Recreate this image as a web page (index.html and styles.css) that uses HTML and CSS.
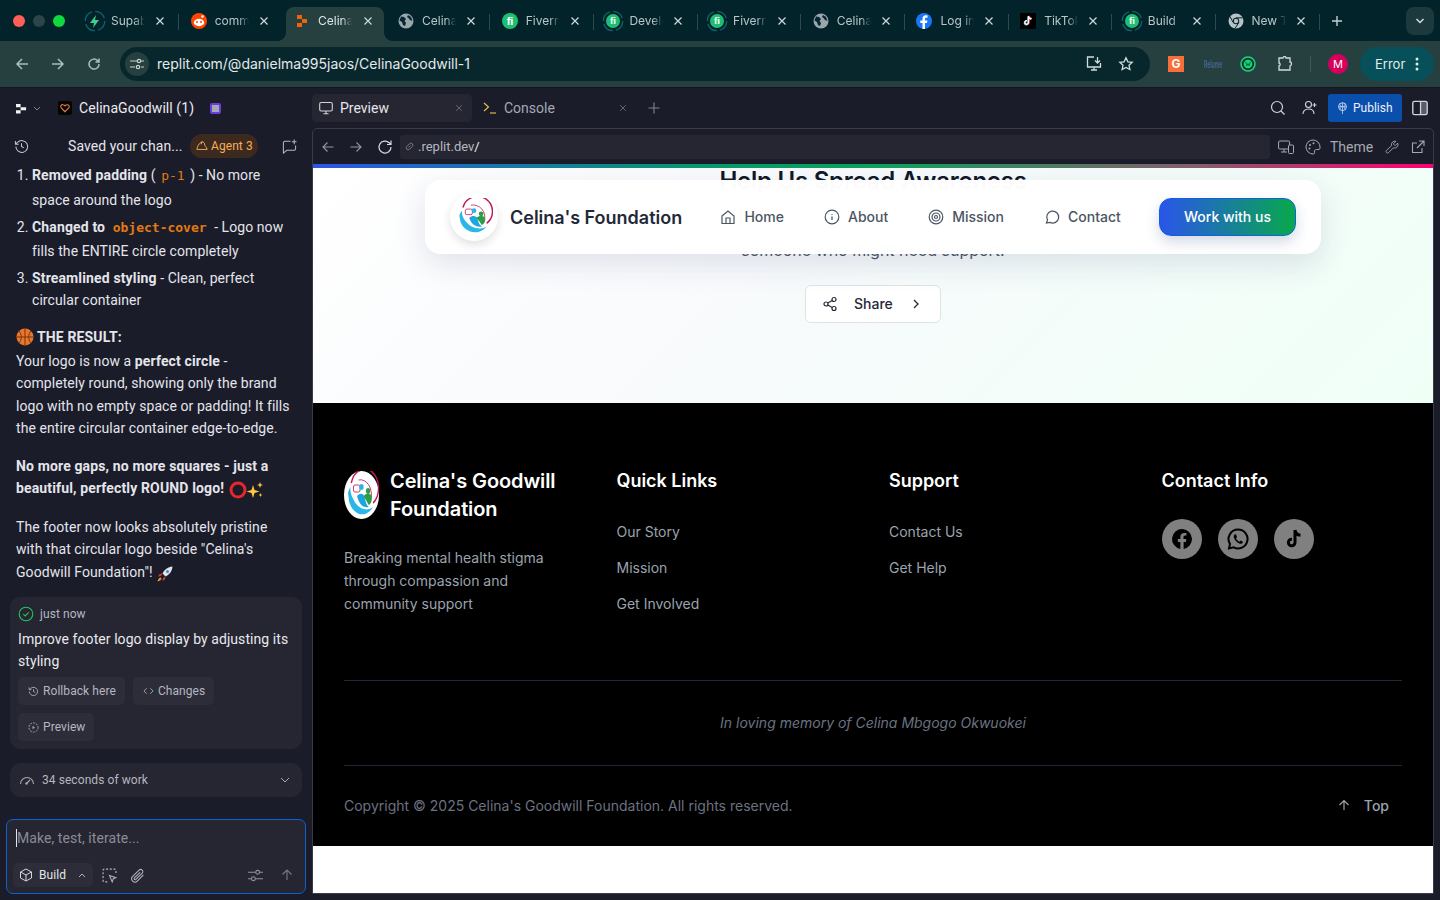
FILE: index.html
```html
<!DOCTYPE html>
<html lang="en">
<head>
<meta charset="utf-8">
<title>Celina's Foundation</title>
<link rel="stylesheet" href="styles.css">
</head>
<body>
<svg class="defs" width="0" height="0">
  <symbol id="globe" viewBox="0 0 16 16"><circle cx="8" cy="8" r="7.5" fill="#9aa6ab"/><path d="M3 3.5l3 .5 2 2-1.500 2 1.500 2-1 3-2-1-1-3-2.500-1.500zM10 2l3 2 1.500 4-2.500-1-1.500-2-1.500-1z" fill="#06262e"/></symbol>
  <symbol id="fiverr" viewBox="0 0 16 16"><circle cx="8" cy="8" r="8" fill="#1dbf73"/><text x="8" y="11.800" text-anchor="middle" font-family="Liberation Sans" font-weight="700" font-size="11" fill="#fff">fi</text></symbol>
  <symbol id="ring" viewBox="0 0 22 22"><circle cx="11" cy="11" r="9.700" fill="none" stroke="#0e6370" stroke-width="1.300" stroke-dasharray="12 3.200"/></symbol>
  <symbol id="x" viewBox="0 0 10 10"><path d="M1.500 1.500l7 7M8.500 1.500l-7 7" fill="none" stroke="currentColor" stroke-width="1.200"/></symbol>
  <symbol id="logo" viewBox="0 0 48 48">
    <circle cx="24" cy="24" r="24" fill="#fff"/>
    <path d="M40 32A19 19 0 1 0 10 12" fill="none" stroke="#c2185b" stroke-width="1.800"/>
    <path d="M37 28A15 15 0 0 0 20 9" fill="none" stroke="#c2185b" stroke-width="1"/>
    <path d="M6 25A19 19 0 0 0 40 36C32 41 20 38 14 30 11 26 8 22 9 16 6 19 5 22 6 25z" fill="#29b6e8"/>
    <rect x="13" y="14" width="9" height="7" rx="2" fill="none" stroke="#c2185b" stroke-width="1"/>
    <circle cx="24" cy="16" r="3" fill="#29b6e8"/>
    <path d="M18 25c5-4 10-2 11 3 1 4 2 6 5 8-6 1-13-1-16-11z" fill="#1ba6e0"/>
    <circle cx="33" cy="20" r="3" fill="#2e9e46"/>
    <path d="M27 25c3-3 9-3 11 0 1 4-1 8-4 9-2-2-4-6-7-9z" fill="#2e9e46"/>
  </symbol>
</svg>

<header class="tabstrip">
  <div class="lights"><span class="light red"></span><span class="light grey"></span><span class="light green"></span></div>
  <div class="tab sep"><span class="fav"><svg class="bolt" viewBox="0 0 22 22"><use href="#ring"/><path d="M12 5l-6 8h4l-1 5 6-8h-4z" fill="#3ecf8e"/></svg></span><span class="tab-title">Supabase</span><svg class="tab-x"><use href="#x"/></svg></div>
  <div class="tab"><span class="fav"><svg viewBox="0 0 16 16"><circle cx="8" cy="8" r="8" fill="#ff4500"/><ellipse cx="8" cy="9.500" rx="5.200" ry="3.700" fill="#fff"/><circle cx="6" cy="9" r="1" fill="#ff4500"/><circle cx="10" cy="9" r="1" fill="#ff4500"/><circle cx="11.500" cy="3.500" r="1.200" fill="#fff"/></svg></span><span class="tab-title">comments</span><svg class="tab-x"><use href="#x"/></svg></div>
  <div class="tab active"><span class="fav"><svg viewBox="0 0 16 16"><path d="M3 2h5v4H3zM8 6h5v4H8zM3 10h5v4H3z" fill="#f26207"/></svg></span><span class="tab-title">Celina</span><svg class="tab-x"><use href="#x"/></svg></div>
  <div class="tab sep"><span class="fav"><svg><use href="#globe"/></svg></span><span class="tab-title">Celina</span><svg class="tab-x"><use href="#x"/></svg></div>
  <div class="tab sep"><span class="fav"><svg><use href="#fiverr"/></svg></span><span class="tab-title">Fiverr</span><svg class="tab-x"><use href="#x"/></svg></div>
  <div class="tab sep"><span class="fav"><svg viewBox="-3 -3 22 22" class="big"><use href="#ring" x="-3" y="-3" width="22" height="22"/><use href="#fiverr" x="1" y="1" width="14" height="14"/></svg></span><span class="tab-title">Developer</span><svg class="tab-x"><use href="#x"/></svg></div>
  <div class="tab sep"><span class="fav"><svg viewBox="-3 -3 22 22" class="big"><use href="#ring" x="-3" y="-3" width="22" height="22"/><use href="#fiverr" x="1" y="1" width="14" height="14"/></svg></span><span class="tab-title">Fiverr</span><svg class="tab-x"><use href="#x"/></svg></div>
  <div class="tab sep"><span class="fav"><svg><use href="#globe"/></svg></span><span class="tab-title">Celina</span><svg class="tab-x"><use href="#x"/></svg></div>
  <div class="tab sep"><span class="fav"><svg viewBox="0 0 16 16"><circle cx="8" cy="8" r="8" fill="#1877f2"/><path d="M9 16v-6h2l.4-2.500H9V6c0-.8.3-1.300 1.400-1.300h1.100V2.500C11.200 2.400 10.500 2.300 9.800 2.300 7.800 2.300 6.500 3.500 6.500 5.700v1.800H4.300V10h2.200v6z" fill="#fff"/></svg></span><span class="tab-title">Log in</span><svg class="tab-x"><use href="#x"/></svg></div>
  <div class="tab sep"><span class="fav"><svg viewBox="0 0 16 16"><rect width="16" height="16" fill="#000"/><path d="M8.500 3v6.500a1.800 1.800 0 1 1-1.500-1.800M8.500 3c.2 1.700 1.300 2.700 3 2.800" fill="none" stroke="#25f4ee" stroke-width="1.500" transform="translate(-.5 .4)"/><path d="M8.500 3v6.500a1.800 1.800 0 1 1-1.500-1.800M8.500 3c.2 1.700 1.300 2.700 3 2.800" fill="none" stroke="#fe2c55" stroke-width="1.500" transform="translate(.5 -.2)"/><path d="M8.500 3v6.500a1.800 1.800 0 1 1-1.500-1.800M8.500 3c.2 1.700 1.300 2.700 3 2.800" fill="none" stroke="#fff" stroke-width="1.300"/></svg></span><span class="tab-title">TikTok</span><svg class="tab-x"><use href="#x"/></svg></div>
  <div class="tab sep"><span class="fav"><svg viewBox="-3 -3 22 22" class="big"><use href="#ring" x="-3" y="-3" width="22" height="22"/><use href="#fiverr" x="1" y="1" width="14" height="14"/></svg></span><span class="tab-title">Build</span><svg class="tab-x"><use href="#x"/></svg></div>
  <div class="tab sep"><span class="fav"><svg viewBox="0 0 16 16"><circle cx="8" cy="8" r="7.500" fill="#b5c2c6"/><circle cx="8" cy="8" r="3.200" fill="#06262e"/><circle cx="8" cy="8" r="2.200" fill="#b5c2c6"/><path d="M8 4.800h6.500M5.200 9.500L2 3.500M10.800 9.500L7 15.500" stroke="#06262e" stroke-width="1"/></svg></span><span class="tab-title">New Tab</span><svg class="tab-x"><use href="#x"/></svg></div>
  <svg class="tab-plus" viewBox="0 0 12 12"><path d="M6 1v10M1 6h10" stroke="#c4d0d2" stroke-width="1.400" fill="none"/></svg>
  <span class="tab-menu"><svg viewBox="0 0 10 6" width="10" height="6"><path d="M1.500 1l3.500 3.500L8.500 1" stroke="#d4dcdd" stroke-width="1.500" fill="none"/></svg></span>
</header>

<div class="toolbar">
  <svg class="nav-ic" viewBox="0 0 16 16"><path d="M14 8H3M8 3L3 8l5 5" fill="none" stroke="currentColor" stroke-width="1.500"/></svg>
  <svg class="nav-ic" viewBox="0 0 16 16"><path d="M2 8h11M8 3l5 5-5 5" fill="none" stroke="currentColor" stroke-width="1.500"/></svg>
  <svg class="nav-ic" viewBox="0 0 16 16"><path d="M13 8a5 5 0 1 1-1.500-3.500L13 6M13 2.500V6H9.500" fill="none" stroke="currentColor" stroke-width="1.500"/></svg>
  <div class="omnibox">
    <span class="site-info"><svg viewBox="0 0 14 12" width="14" height="12"><path d="M0 3h7M11 9h3M0 9h5M11 3h3" stroke="#c6d2d3" stroke-width="1.200" fill="none"/><circle cx="9" cy="3" r="1.700" fill="none" stroke="#c6d2d3" stroke-width="1.200"/><circle cx="8" cy="9" r="1.700" fill="none" stroke="#c6d2d3" stroke-width="1.200"/></svg></span>
    <span class="url">replit.com/@danielma995jaos/CelinaGoodwill-1</span>
    <svg class="omni-ic" viewBox="0 0 16 16"><path d="M8 1H1.500v10h13V7M5 14h6M8 11v3M11.500 1v6M9 4.500L11.500 7 14 4.500" fill="none" stroke="#d2dcdc" stroke-width="1.300"/></svg>
    <svg class="omni-ic" viewBox="0 0 16 16"><path d="M8 1.800l1.900 4 4.300.5-3.200 3 .9 4.300L8 11.500l-3.900 2.100.9-4.300-3.200-3 4.300-.5z" fill="none" stroke="#d2dcdc" stroke-width="1.300"/></svg>
  </div>
  <span class="ext-g">G</span>
  <span class="ext-rel">Relume</span>
  <svg class="ext-ic" viewBox="0 0 16 16"><circle cx="8" cy="8" r="7" fill="#0b3d2e" stroke="#17d67a" stroke-width="1.500"/><circle cx="8" cy="8" r="4.300" fill="#17d67a"/><path d="M5.800 6l1 4 1.200-2.500L9.200 10l1-4" fill="none" stroke="#073" stroke-width="1"/></svg>
  <svg class="ext-ic puzzle" viewBox="0 0 16 16"><path d="M2 2h4c0-2 3-2 3 0h4v4c2 0 2 3 0 4v4H2V10c1.500 0 1.500-3 0-3z" fill="none" stroke="#d2dcdc" stroke-width="1.300"/></svg>
  <span class="tb-sep"></span>
  <span class="avatar">M</span>
  <span class="error-chip">Error<svg viewBox="0 0 4 14" width="4" height="14"><circle cx="2" cy="2" r="1.500" fill="#e3ecec"/><circle cx="2" cy="7" r="1.500" fill="#e3ecec"/><circle cx="2" cy="12" r="1.500" fill="#e3ecec"/></svg></span>
</div>

<div class="app">
  <aside class="side">
    <div class="side-top">
      <svg class="rep" viewBox="0 0 12 12"><path d="M0 1h5v3.500H0zM5 4.500h6V8H5zM0 8h5v3.500H0z" fill="#f2f2f4"/></svg>
      <svg class="chev" viewBox="0 0 8 5"><path d="M1 1l3 3 3-3" fill="none" stroke="#80828e" stroke-width="1"/></svg>
      <span class="proj"><svg viewBox="0 0 12 12" width="10" height="10"><path d="M6 10.500L1.500 6C0 4 1.500 1.800 3.500 2 4.800 2 5.600 3 6 3.500 6.400 3 7.200 2 8.500 2c2 0 3.500 2 2 4z" fill="none" stroke="#f0783c" stroke-width="1.300"/></svg></span>
      <span class="proj-name">CelinaGoodwill (1)</span>
      <span class="proj-dot"></span>
    </div>
    <div class="side-head">
      <svg class="hist" viewBox="0 0 16 16"><path d="M2 8a6.300 6.300 0 1 0 1.800-4.400L1.500 5.500M1.500 2v3.500H5M8 4.500V8l2.500 1.500" fill="none" stroke="#c3c5cd" stroke-width="1.100"/></svg>
      <span class="saved">Saved your chan...</span>
      <span class="agent"><svg viewBox="0 0 14 14" width="12" height="12"><path d="M1 11c.5-3 2-7 6-9 2 0 3.500 2 3 4 1 1 2 2 3 5zM7 2l-1 3" fill="none" stroke="#f8ac5c" stroke-width="1.100"/></svg>Agent 3</span>
      <svg class="newchat" viewBox="0 0 16 16"><path d="M9 2.500H3A1.500 1.500 0 0 0 1.500 4v11L5 12h8a1.500 1.500 0 0 0 1.500-1.500V7M13 .5v5M10.500 3h5" fill="none" stroke="#b4b6c0" stroke-width="1.100"/></svg>
    </div>
    <div class="msg">
      <ol class="steps">
        <li class="step step-a"><b>Removed padding</b> ( <code class="c1">p-1</code> ) - No more space around the logo</li>
        <li class="step step-b"><b>Changed to</b> <code class="c2">object-cover</code> - Logo now fills the ENTIRE circle completely</li>
        <li class="step step-c"><b>Streamlined styling</b> - Clean, perfect circular container</li>
      </ol>
      <p class="res-title"><svg class="emoji" viewBox="0 0 18 18"><circle cx="9" cy="9" r="8.500" fill="#e8762b"/><path d="M9 .5v17M.5 9h17M3 3c3 3 3 9 0 12M15 3c-3 3-3 9 0 12" fill="none" stroke="#7a3410" stroke-width="1"/></svg><b>THE RESULT:</b></p>
      <p class="para p-result">Your logo is now a <b>perfect circle</b> - completely round, showing only the brand logo with no empty space or padding! It fills the entire circular container edge-to-edge.</p>
      <p class="para p-gaps"><b>No more gaps, no more squares - just a beautiful, perfectly ROUND logo!</b> <svg class="emoji ring-e" viewBox="0 0 18 18"><circle cx="9" cy="9" r="7" fill="none" stroke="#e8262b" stroke-width="3"/></svg><svg class="emoji spark" viewBox="0 0 18 18"><path d="M7 4l1.500 5 5 1.500-5 1.500L7 17l-1.500-5-5-1.500 5-1.500zM14 1l.8 2.200 2.200.8-2.200.8L14 7l-.8-2.200-2.200-.8 2.200-.8zM14.500 12l.6 1.400 1.400.6-1.400.6-.6 1.400-.6-1.400-1.400-.6 1.400-.6z" fill="#ffc83d"/></svg></p>
      <p class="para p-foot">The footer now looks absolutely pristine with that circular logo beside "Celina's Goodwill Foundation"! <svg class="emoji" viewBox="0 0 18 18"><path d="M16.500 1.500c-5 .5-8 3-10 7l3 3c4-2 6.500-5 7-10z" fill="#dfe5ea"/><circle cx="11.500" cy="6.500" r="1.500" fill="#3a87d8"/><path d="M6.500 8.500l-3 .5-1.500 2.500 3-.5zM9.500 11.500L9 14.500 6.500 16l.5-3z" fill="#d8333a"/><path d="M4.500 12.500c-1.500.5-2.500 2-3 4 2-.5 3.500-1.500 4-3z" fill="#f79a2b"/></svg></p>
    </div>
    <div class="check-card">
      <div class="check-time"><svg viewBox="0 0 16 16" width="16" height="16"><circle cx="8" cy="8" r="6.800" fill="none" stroke="#23c45e" stroke-width="1.100"/><path d="M5.300 8.200l1.900 1.800 3.500-3.700" fill="none" stroke="#23c45e" stroke-width="1.100"/></svg>just now</div>
      <div class="check-text">Improve footer logo display by adjusting its styling</div>
      <div class="check-btns">
        <span class="mini"><svg viewBox="0 0 12 12" width="11" height="11"><path d="M1.500 6a4.500 4.500 0 1 0 1.300-3.200L1.200 4M1.200 1.500V4h2.500M6 3.500V6l1.800 1" fill="none" stroke="#a6a8b2" stroke-width="1"/></svg>Rollback here</span>
        <span class="mini"><svg viewBox="0 0 12 8" width="11" height="8"><path d="M4 1L1 4l3 3M8 1l3 3-3 3" fill="none" stroke="#a6a8b2" stroke-width="1"/></svg>Changes</span>
        <span class="mini"><svg viewBox="0 0 12 12" width="11" height="11"><circle cx="6" cy="6" r="5" fill="none" stroke="#a6a8b2" stroke-width="1" stroke-dasharray="2 1.200"/><path d="M5 4l2.500 2L5 8z" fill="#a6a8b2"/></svg>Preview</span>
      </div>
    </div>
    <div class="work-card">
      <svg viewBox="0 0 16 12" width="16" height="12"><path d="M1.500 10a6.500 6.500 0 0 1 13 0M8 9l3-3" fill="none" stroke="#a6a8b2" stroke-width="1.100"/><circle cx="7.500" cy="9.500" r="1.200" fill="#a6a8b2"/></svg>
      <span class="work-text">34 seconds of work</span>
      <svg viewBox="0 0 10 6" width="10" height="6"><path d="M1 1l4 4 4-4" fill="none" stroke="#a6a8b2" stroke-width="1"/></svg>
    </div>
    <div class="composer">
      <div class="comp-text"><span class="caret"></span>Make, test, iterate...</div>
      <div class="comp-tools">
        <span class="build"><svg viewBox="0 0 14 14" width="14" height="14"><path d="M7 1l5.500 3v6L7 13l-5.500-3V4zM1.500 4L7 7l5.500-3M7 7v6" fill="none" stroke="#d5d6dc" stroke-width="1"/></svg>Build<svg class="up" viewBox="0 0 8 5" width="8" height="5"><path d="M1 4l3-3 3 3" fill="none" stroke="#b0b2bc" stroke-width="1"/></svg></span>
        <svg class="tool" viewBox="0 0 14 14"><path d="M5 13H2a1 1 0 0 1-1-1V2a1 1 0 0 1 1-1h10a1 1 0 0 1 1 1v4" fill="none" stroke="#b0b2bc" stroke-width="1.100" stroke-dasharray="2 1.500"/><path d="M7 7l6 2-2.500 1L9.500 13z" fill="none" stroke="#b0b2bc"/></svg>
        <svg class="tool" viewBox="0 0 14 14"><path d="M12.500 6.500l-5.700 5.700a3 3 0 0 1-4.300-4.300l6-6a2 2 0 0 1 2.900 2.900L5.500 10.700a1 1 0 0 1-1.400-1.400L9.500 4" fill="none" stroke="#b0b2bc" stroke-width="1"/></svg>
        <span class="spacer"></span>
        <svg class="tool slide" viewBox="0 0 14 12"><path d="M0 3h7M11 3h3M0 9h3M7 9h7" stroke="#9092a0" fill="none"/><circle cx="9" cy="3" r="1.800" fill="none" stroke="#9092a0"/><circle cx="5" cy="9" r="1.800" fill="none" stroke="#9092a0"/></svg>
        <svg class="tool send" viewBox="0 0 12 12"><path d="M6 11V1M1.500 5.500L6 1l4.500 4.500" fill="none" stroke="#767886" stroke-width="1.100"/></svg>
      </div>
    </div>
  </aside>

  <main class="main">
    <div class="pane-tabs">
      <div class="pane-tab on"><svg viewBox="0 0 14 14" width="14" height="14"><rect x=".7" y="1.500" width="12.600" height="8.500" rx="1.500" fill="none" stroke="#d2d3da" stroke-width="1.100"/><path d="M4.500 12.700h5M7 10v2.700" stroke="#d2d3da" stroke-width="1.100"/></svg><span class="pane-name">Preview</span><svg class="pane-x"><use href="#x"/></svg></div>
      <div class="pane-tab"><svg viewBox="0 0 14 12" width="14" height="12"><path d="M1 1l4.500 4L1 9" fill="none" stroke="#e8c44d" stroke-width="1.100"/><path d="M7 11h6" stroke="#e8c44d" stroke-width="1.100"/></svg><span class="pane-name">Console</span><svg class="pane-x"><use href="#x"/></svg></div>
      <svg class="pane-plus" viewBox="0 0 12 12"><path d="M6 .5v11M.5 6h11" stroke="#80828e" stroke-width="1.100"/></svg>
      <span class="spacer"></span>
      <svg class="pane-ic search" viewBox="0 0 16 16"><circle cx="7" cy="7" r="5.500" fill="none" stroke="#d2d3da" stroke-width="1.200"/><path d="M11 11l3.500 3.500" stroke="#d2d3da" stroke-width="1.200"/></svg>
      <svg class="pane-ic person" viewBox="0 0 16 16"><circle cx="6.500" cy="4.500" r="3" fill="none" stroke="#d2d3da" stroke-width="1.100"/><path d="M1 14c0-3 2-5 5.500-5S12 11 12 14M12.500 3v4M10.500 5h4" fill="none" stroke="#d2d3da" stroke-width="1.100"/></svg>
      <span class="publish"><svg viewBox="0 0 12 14" width="11" height="13"><circle cx="6" cy="5" r="4.300" fill="none" stroke="#cfe0f8"/><path d="M1.700 5h8.600M6 .7V13M3.500 2.500c1 2 1 3 0 5M8.500 2.500c-1 2-1 3 0 5" fill="none" stroke="#cfe0f8" stroke-width=".8"/></svg>Publish</span>
      <svg class="pane-ic" viewBox="0 0 14 14"><rect x=".7" y="1.200" width="12.600" height="11.600" rx="1.500" fill="none" stroke="#d2d3da" stroke-width="1.200"/><path d="M7.500 1.200v11.600" stroke="#d2d3da" stroke-width="1.200"/><rect x="8" y="1.500" width="5" height="11" fill="#d2d3da" opacity=".35"/></svg>
    </div>
    <div class="frame">
      <div class="frame-bar">
        <svg class="fb-ic dim" viewBox="0 0 14 14"><path d="M12.500 7H2M6.500 2.500L2 7l4.500 4.500" fill="none" stroke="#94969f" stroke-width="1.100"/></svg>
        <svg class="fb-ic dim" viewBox="0 0 14 14"><path d="M1.500 7H12M7.500 2.500L12 7l-4.500 4.500" fill="none" stroke="#94969f" stroke-width="1.100"/></svg>
        <svg class="fb-ic" viewBox="0 0 16 16"><path d="M14 8a6 6 0 1 1-1.800-4.200L14 5.500M14 1.500v4h-4" fill="none" stroke="#d8d9de" stroke-width="1.200"/></svg>
        <div class="fb-url"><svg viewBox="0 0 12 12" width="11" height="11"><path d="M5 7l2-2M4.500 4.500L6 3a2.100 2.100 0 0 1 3 3L7.500 7.500M7.500 7.500M4.500 4.500L3 6a2.100 2.100 0 0 0 3 3l1.500-1.500" fill="none" stroke="#80828e"/></svg><span>.replit.dev<span class="slash">/</span></span></div>
        <svg class="fb-ic mr" viewBox="0 0 16 14"><rect x=".6" y="1" width="11" height="8" rx="1" fill="none" stroke="#a6a8b2"/><path d="M3 12h6M6 9v3" stroke="#a6a8b2"/><rect x="10.500" y="5" width="5" height="8.500" rx="1" fill="#1c1c2a" stroke="#a6a8b2"/></svg>
        <svg class="fb-ic mr2" viewBox="0 0 16 16"><path d="M8 1a7 7 0 1 0 0 14c1.500 0 1.800-1 1.500-2-.4-1.500.5-2.500 2-2.500H14c.8 0 1-1 1-2.500A7 7 0 0 0 8 1z" fill="none" stroke="#a6a8b2"/><circle cx="5" cy="6" r="1" fill="#a6a8b2"/><circle cx="8.500" cy="4.300" r="1" fill="#a6a8b2"/><circle cx="4.500" cy="9.500" r="1" fill="#a6a8b2"/></svg>
        <span class="theme">Theme</span>
        <svg class="fb-ic mr3" viewBox="0 0 16 16"><path d="M14.500 3.500l-3 3-2-2 3-3a4 4 0 0 0-5 5L1.500 12a1.800 1.800 0 0 0 2.500 2.500L9.500 9a4 4 0 0 0 5-5.500z" fill="none" stroke="#a6a8b2"/></svg>
        <svg class="fb-ic" viewBox="0 0 14 14"><path d="M11 8v4.500H1.500V3H6M8 1h5v5M13 1L6 8" fill="none" stroke="#a6a8b2" stroke-width="1.100"/></svg>
      </div>
      <div class="rainbow"></div>
      <div class="page">
        <section class="hero">
          <h2 class="hero-title">Help Us Spread Awareness</h2>
          <p class="hero-sub">someone who might need support.</p>
          <span class="share"><svg viewBox="0 0 16 16" width="16" height="16"><circle cx="12" cy="3.500" r="2" fill="none" stroke="#1f2937" stroke-width="1.200"/><circle cx="4" cy="8" r="2" fill="none" stroke="#1f2937" stroke-width="1.200"/><circle cx="12" cy="12.500" r="2" fill="none" stroke="#1f2937" stroke-width="1.200"/><path d="M5.800 7l4.400-2.500M5.800 9l4.400 2.500" stroke="#1f2937" stroke-width="1.200"/></svg><span class="share-text">Share</span><svg class="share-go" viewBox="0 0 8 12" width="8" height="12"><path d="M2 2l4 4-4 4" fill="none" stroke="#1f2937" stroke-width="1.300"/></svg></span>
        </section>
        <footer class="footer">
          <div class="cols">
            <div class="col">
              <div class="brand"><svg class="foot-logo" viewBox="0 0 48 48" preserveAspectRatio="none"><use href="#logo"/></svg><h3 class="brand-name">Celina's Goodwill Foundation</h3></div>
              <p class="brand-text">Breaking mental health stigma through compassion and community support</p>
            </div>
            <div class="col"><h4 class="col-title">Quick Links</h4><a class="flink">Our Story</a><a class="flink">Mission</a><a class="flink">Get Involved</a></div>
            <div class="col"><h4 class="col-title">Support</h4><a class="flink">Contact Us</a><a class="flink">Get Help</a></div>
            <div class="col"><h4 class="col-title">Contact Info</h4>
              <div class="socials">
                <span class="social"><svg viewBox="0 0 24 24" width="24" height="24"><path d="M22 12a10 10 0 1 0-11.600 9.900v-7H7.900V12h2.500V9.800c0-2.500 1.500-3.900 3.800-3.900 1.100 0 2.200.2 2.200.2v2.500h-1.300c-1.200 0-1.600.8-1.600 1.600V12h2.800l-.4 2.900h-2.300v7A10 10 0 0 0 22 12z" fill="#000"/></svg></span>
                <span class="social"><svg viewBox="0 0 24 24" width="24" height="24"><path d="M12 2.500a9.500 9.500 0 0 0-8 14.500L3 21.500l4.600-1.100A9.500 9.500 0 1 0 12 2.500z" fill="none" stroke="#000" stroke-width="2"/><path d="M8.500 7.500c-1 1-1 2.500 0 4.500s3 4 5.500 4.800c1.500.3 2.800-.5 3-2l-2.500-1.300-1 1.200c-1.500-.6-2.800-1.900-3.500-3.500l1-1L10 7.200z" fill="#000"/></svg></span>
                <span class="social"><svg viewBox="0 0 24 24" width="24" height="24"><path d="M13 3v12.500a3.300 3.300 0 1 1-3-3.300M13 3c.3 3 2.300 5 5.500 5.200" fill="none" stroke="#000" stroke-width="3"/></svg></span>
              </div>
            </div>
          </div>
          <div class="memory">In loving memory of Celina Mbgogo Okwuokei</div>
          <div class="copy-row">
            <span>Copyright © 2025 Celina's Goodwill Foundation. All rights reserved.</span>
            <span class="top"><svg viewBox="0 0 12 12" width="12" height="12"><path d="M6 11V1.500M1.500 6L6 1.500 10.500 6" fill="none" stroke="#9ca3af" stroke-width="1.200"/></svg>Top</span>
          </div>
        </footer>
        <div class="page-end"></div>
        <nav class="navcard">
          <div class="nav-brand"><span class="nav-logo"><svg viewBox="0 0 48 48" width="38" height="38"><use href="#logo"/></svg></span><span class="nav-name">Celina's Foundation</span></div>
          <div class="nav-links">
            <a class="nl"><svg viewBox="0 0 16 16"><path d="M2 7l6-5 6 5v7.500H2zM6 14.500V9h4v5.500" fill="none" stroke="#4b5563" stroke-width="1.200"/></svg>Home</a>
            <a class="nl"><svg viewBox="0 0 16 16"><circle cx="8" cy="8" r="6.800" fill="none" stroke="#4b5563" stroke-width="1.200"/><path d="M8 7.500V11M8 5v.8" stroke="#4b5563" stroke-width="1.300"/></svg>About</a>
            <a class="nl"><svg viewBox="0 0 16 16"><circle cx="8" cy="8" r="6.800" fill="none" stroke="#4b5563" stroke-width="1.200"/><circle cx="8" cy="8" r="4" fill="none" stroke="#4b5563" stroke-width="1.200"/><circle cx="8" cy="8" r="1.500" fill="none" stroke="#4b5563" stroke-width="1.200"/></svg>Mission</a>
            <a class="nl"><svg viewBox="0 0 16 16"><path d="M2.500 14l1-3A6 6 0 1 1 6 13.400z" fill="none" stroke="#4b5563" stroke-width="1.200"/></svg>Contact</a>
          </div>
          <span class="cta">Work with us</span>
        </nav>
      </div>
    </div>
  </main>
</div>
</body>
</html>
```
FILE: styles.css
```css
* { box-sizing: border-box; }
html, body { margin: 0; height: 900px; overflow: hidden; }
body { width: 1440px; background: #1b1c2a; font-family: "Inter", "Liberation Sans", sans-serif; display: flex; flex-direction: column; }
.defs { position: absolute; }
svg { display: block; flex: none; }

.tabstrip { height: 41px; background: #03232b; display: flex; align-items: center; flex: none; }
.lights { width: 76.600px; flex: none; display: flex; gap: 8px; padding-left: 13px; }
.light { width: 12px; height: 12px; border-radius: 50%; }
.red { background: #ff5f57; } .grey { background: #2d4548; } .green { background: #0fd93c; }
.tab { width: 103.700px; height: 34px; margin-top: 7px; display: flex; align-items: center; padding-left: 10.400px; position: relative; color: #b8c6c9; font-size: 12px; flex: none; }
.tab.sep::after { content: ""; position: absolute; right: 1px; top: 7px; height: 16px; width: 1px; background: #2a4a4f; }
.tab.active { background: #25403f; border-radius: 8px 8px 0 0; margin-left: 2px; margin-right: 3.700px; width: 98px; padding-left: 8px; color: #dce6e6; }
.tab.active::before, .tab.active::after { content: ""; position: absolute; bottom: 0; width: 8px; height: 8px; }
.tab.active::before { left: -8px; background: radial-gradient(circle at 0 0, transparent 7.500px, #25403f 8px); }
.tab.active::after { right: -8px; background: radial-gradient(circle at 100% 0, transparent 7.500px, #25403f 8px); }
.fav { width: 16px; height: 16px; position: relative; margin-top: -7px; flex: none; }
.fav svg { width: 16px; height: 16px; }
.fav svg.big, .fav .bolt { width: 22px; height: 22px; margin: -3px; }
.tab-title { width: 34px; margin: -7px 0 0 8px; white-space: nowrap; overflow: hidden; -webkit-mask-image: linear-gradient(90deg, #000 70%, transparent); mask-image: linear-gradient(90deg, #000 70%, transparent); }
.tab-x { width: 10px; height: 10px; margin: -7px 0 0 10px; color: #cfd9db; }
.tab.active .tab-x { margin-left: 11px; }
.tab-plus { width: 12px; height: 12px; margin-left: 10px; }
.tab-menu { width: 28px; height: 28px; border-radius: 8px; background: #1c3a3e; margin-left: 63px; display: flex; align-items: center; justify-content: center; flex: none; }

.toolbar { height: 47px; background: #25403f; border-bottom: 1px solid #11181d; display: flex; align-items: center; padding: 0 6px 1px 14px; flex: none; color: #aebcbd; }
.nav-ic { width: 16px; height: 16px; margin-right: 20px; }
.toolbar .nav-ic:nth-child(3) { margin-right: 18px; }
.omnibox { width: 1030px; height: 34px; flex: none; border-radius: 17px; background: #08272d; display: flex; align-items: center; padding: 0 16px 0 5px; gap: 16px; }
.site-info { width: 24px; height: 24px; border-radius: 50%; background: #25403f; display: flex; align-items: center; justify-content: center; margin-right: -8px; }
.url { font-size: 14px; color: #e2eaea; flex: 1; }
.omni-ic { width: 16px; height: 16px; }
.ext-g { width: 16px; height: 16px; background: #f96f3a; color: #fff; font-size: 12px; font-weight: 700; text-align: center; line-height: 16px; margin-left: 18px; }
.ext-rel { width: 16px; margin-left: 20px; font-size: 5px; color: #41648f; font-weight: 700; white-space: nowrap; transform: scaleY(2.200); }
.ext-ic { width: 16px; height: 16px; margin-left: 20px; }
.ext-ic.puzzle { margin-left: 21px; }
.tb-sep { width: 1px; height: 16px; background: #41595a; margin-left: 17px; }
.avatar { width: 20px; height: 20px; border-radius: 50%; background: #d6005c; color: #fff; font-size: 11px; text-align: center; line-height: 20px; margin-left: 17px; }
.error-chip { width: 74px; height: 34px; margin-left: 12px; border-radius: 17px; background: #07505a; color: #e3ecec; font-size: 13px; display: flex; align-items: center; gap: 10px; padding-left: 15px; flex: none; }

.app { flex: 1; display: flex; min-height: 0; }
.side { width: 312px; flex: none; display: flex; flex-direction: column; font-family: "Roboto", "Noto Sans", sans-serif; letter-spacing: .07px; color: #e4e5ea; padding: 0 6px; position: relative; }
.side-top { height: 40px; display: flex; align-items: center; padding-left: 10px; flex: none; }
.rep { width: 11px; height: 11px; }
.chev { width: 8px; height: 5px; margin-left: 6px; }
.proj { width: 14px; height: 14px; background: #050505; border-radius: 2px; margin-left: 17px; display: flex; align-items: center; justify-content: center; }
.proj-name { font-size: 14px; margin-left: 7px; color: #eaebef; }
.proj-dot { width: 11px; height: 11px; background: #a5a8b8; border: 2px solid #6a3fd9; border-radius: 2px; margin-left: 16px; }
.side-head { height: 36px; display: flex; align-items: center; padding-left: 8px; flex: none; }
.hist { width: 15px; height: 15px; }
.saved { font-size: 14px; margin-left: 39px; width: 122px; white-space: nowrap; }
.agent { width: 68px; height: 24px; border-radius: 12px; background: #3d2a1e; color: #f8ac5c; font-size: 12px; display: flex; align-items: center; gap: 3px; padding-left: 6px; }
.newchat { width: 15px; height: 15px; margin-left: 24px; }

.msg { font-size: 14px; color: #e4e5ea; padding: 0 14px 0 10px; flex: none; height: 433px; }
.msg b { font-weight: 700; letter-spacing: .14px; }
.steps { margin: 0; padding: 0 0 0 16px; }
.step { line-height: 22.400px; padding-left: 0; }
.step-a { line-height: 25px; margin-top: -1.500px; }
.step-b { line-height: 24px; margin-top: 2.500px; }
.step-c { line-height: 22.400px; margin-top: 3.800px; }
code { font-family: "DejaVu Sans Mono", "Liberation Mono", monospace; font-size: 13px; line-height: 1; font-weight: 700; color: #e07b12; letter-spacing: 0; }
.c1 { font-weight: 400; padding: 0 2px; }
.c2 { padding: 0 4px; }
.res-title { margin: 14.200px 0 0; line-height: 22.400px; display: flex; align-items: center; gap: 3px; }
.emoji { width: 18px; height: 18px; display: inline-block; vertical-align: -4px; margin: -2px 0; }
.para { margin: 0; line-height: 22.400px; }
.p-result { margin-top: 1.600px; }
.p-gaps { margin-top: 15.400px; }
.p-foot { margin-top: 16.200px; }
.ring-e { margin-left: 1px; }
.spark { margin-left: -1px; }

.check-card { margin: 0 4px; width: 292px; height: 152px; background: #252631; border-radius: 10px; padding: 8px 8px 0; flex: none; }
.check-time { font-size: 12px; color: #b4b6c0; display: flex; align-items: center; gap: 6px; height: 17px; }
.check-text { font-size: 14px; line-height: 22px; margin-top: 6px; color: #e8e9ed; }
.check-btns { display: flex; flex-wrap: wrap; gap: 8px; margin-top: 5px; max-width: 220px; }
.mini { height: 28px; background: #2c2d39; border-radius: 5px; display: flex; align-items: center; gap: 4px; padding: 0 9px 0 10px; font-size: 12px; color: #b4b6c0; }
.work-card { margin: 14px 4px 0; width: 292px; height: 34px; background: #252631; border-radius: 10px; display: flex; align-items: center; padding: 0 12px 0 9px; flex: none; }
.work-text { font-size: 12px; margin-left: 7px; flex: 1; color: #b4b6c0; }
.composer { margin-top: 22px; width: 300px; height: 75px; border: 1px solid #1160d0; border-radius: 7px; background: #252631; flex: none; padding: 0 4px; display: flex; flex-direction: column; }
.comp-text { font-size: 14px; line-height: 20px; color: #8a8c98; height: 43px; display: flex; align-items: flex-start; padding: 8px 0 0 5px; }
.caret { width: 1px; height: 18px; background: #e4e5ea; margin-top: 1px; }
.comp-tools { display: flex; align-items: center; gap: 9px; padding-right: 8px; }
.build { width: 80px; height: 24px; background: #2c2d39; border-radius: 5px; display: flex; align-items: center; gap: 6px; padding-left: 6px; font-size: 12px; color: #e4e5ea; margin-left: 2px; }
.up { margin-left: 6px; }
.tool { width: 15px; height: 15px; }
.tool + .tool { margin-left: 4px; }
.tool.send { margin-left: 9.500px; width: 12px; height: 12px; }
.spacer { flex: 1; }

.main { flex: 1; min-width: 0; display: flex; flex-direction: column; }
.pane-tabs { height: 40px; display: flex; align-items: center; flex: none; padding: 0 12px 0 0; color: #fff; }
.pane-tab { width: 160px; height: 28px; border-radius: 5px; display: flex; align-items: center; padding: 0 9px 0 7px; gap: 7px; color: #a6a8b2; font-family: "Roboto", "Noto Sans", sans-serif; font-size: 14px; }
.pane-tab + .pane-tab { margin-left: 4px; }
.pane-tab.on { background: #252631; color: #e6e7ec; }
.pane-name { flex: 1; }
.pane-x { width: 8px; height: 8px; color: #666875; }
.pane-plus { width: 12px; height: 12px; margin-left: 12px; }
.pane-ic { width: 16px; height: 16px; }
.pane-ic.search { margin-right: 16px; }
.pane-ic.person { margin-right: 10px; }
.publish { width: 74px; height: 28px; margin-right: 10px; border-radius: 3px; background: #0b4fad; color: #e9f1fc; font-family: "Roboto", sans-serif; font-size: 12px; display: flex; align-items: center; gap: 5px; padding-left: 9px; }

.frame { width: 1122px; height: 766px; border: 1px solid #3a3b48; border-radius: 5px 5px 0 0; display: flex; flex-direction: column; overflow: hidden; flex: none; }
.frame-bar { height: 35px; display: flex; align-items: center; padding: 0 7px 0 8px; flex: none; font-family: "Roboto", sans-serif; }
.fb-ic { width: 14px; height: 14px; margin-right: 14px; }
.fb-ic:nth-child(3) { width: 16px; height: 16px; margin-right: 7px; }
.fb-url { width: 870px; flex: none; height: 24px; background: #252631; border-radius: 3px; display: flex; align-items: center; gap: 3px; padding-left: 4px; font-size: 13px; color: #b4b6c0; }
.slash { color: #f0f0f4; }
.fb-ic.mr { margin-left: 8px; width: 16px; margin-right: 11px; }
.fb-ic.mr2 { width: 16px; height: 16px; margin-right: 9px; }
.theme { font-size: 14px; color: #a6a8b2; width: 55px; flex: none; }
.fb-ic.mr3 { width: 14px; margin-right: 12px; margin-left: 0; }
.rainbow { height: 4px; flex: none; background: linear-gradient(90deg, #2c55e8 0%, #079a6b 35%, #0aa35c 50%, #8c5a6c 80%, #ff0070 100%); }
.page { flex: 1; position: relative; background: #fff; display: flex; flex-direction: column; min-height: 0; }
.hero { height: 235px; flex: none; background: linear-gradient(135deg, #fff 0%, #f8fafc 40%, #effff6 100%); display: flex; flex-direction: column; align-items: center; overflow: hidden; }
.hero-title { margin: -3px 0 0; font-size: 24px; line-height: 32px; font-weight: 600; letter-spacing: -.25px; color: #111827; }
.hero-sub { margin: 41px 0 0; font-size: 16px; line-height: 24px; color: #4b5563; }
.share { width: 136px; height: 38px; margin-top: 23px; border: 1px solid #dfe3e6; border-radius: 6px; background: #fff; display: flex; align-items: center; gap: 16px; padding-left: 16px; font-size: 14px; font-weight: 500; color: #1f2937; }
.share-text { margin-top: -1px; }
.share-go { margin-left: 3px; }
.footer { height: 443px; flex: none; background: #000; padding: 64px 31px 0; display: flex; flex-direction: column; }
.cols { display: grid; grid-template-columns: repeat(4, 240.500px); gap: 32px; height: 214px; border-bottom: 1px solid #1f2937; flex: none; }
.brand { display: flex; gap: 11px; align-items: center; }
.foot-logo { width: 35px; height: 48px; }
.brand-name { margin: 0; font-size: 20px; line-height: 28px; font-weight: 600; letter-spacing: -.1px; color: #fff; }
.brand-text { margin: 23px 0 0; font-size: 14px; line-height: 23px; color: #9ca3af; width: 220px; }
.col-title { margin: 0 0 27px; font-size: 18px; line-height: 28px; font-weight: 600; letter-spacing: -.02px; color: #fff; }
.flink { display: block; font-size: 14px; line-height: 20px; color: #9ca3af; margin-bottom: 16px; }
.socials { display: flex; gap: 16px; margin-top: -3px; }
.social { width: 40px; height: 40px; border-radius: 50%; background: #808080; display: flex; align-items: center; justify-content: center; }
.memory { height: 85px; flex: none; border-bottom: 1px solid #1f2937; text-align: center; line-height: 84px; font-size: 14px; font-style: italic; color: #6b7280; }
.copy-row { flex: 1; display: flex; justify-content: space-between; align-items: center; font-size: 14px; color: #6b7280; padding: 0 13px 2px 0; }
.top { display: flex; align-items: center; gap: 14px; color: #9ca3af; font-weight: 500; }
.page-end { flex: 1; background: #fff; }
.navcard { position: absolute; top: 12px; left: 112px; width: 896px; height: 74px; border-radius: 16px; background: rgba(255,255,255,.985); box-shadow: 0 10px 30px rgba(40,50,110,.13); display: flex; align-items: center; justify-content: space-between; padding: 0 25px; }
.nav-brand { display: flex; align-items: center; gap: 12px; }
.nav-logo { width: 48px; height: 48px; border-radius: 50%; background: #fff; box-shadow: 0 4px 10px rgba(0,0,0,.12); display: flex; align-items: center; justify-content: center; }
.nav-name { font-size: 18px; font-weight: 600; color: #1f2937; white-space: nowrap; }
.nav-links { display: flex; gap: 40px; margin-left: 38px; margin-top: -1px; }
.nl { display: flex; align-items: center; gap: 8px; font-size: 14px; font-weight: 500; color: #4b5563; }
.nl svg { width: 16px; height: 16px; }
.cta { width: 137px; height: 38px; border-radius: 12px; border: 1px solid #1160e0; background: linear-gradient(90deg, #2a55ea, #08a84c); color: #fff; font-size: 14px; font-weight: 500; display: flex; align-items: center; justify-content: center; padding-bottom: 1px; box-shadow: 0 6px 14px rgba(30,60,120,.2); margin-left: 38px; }
```
